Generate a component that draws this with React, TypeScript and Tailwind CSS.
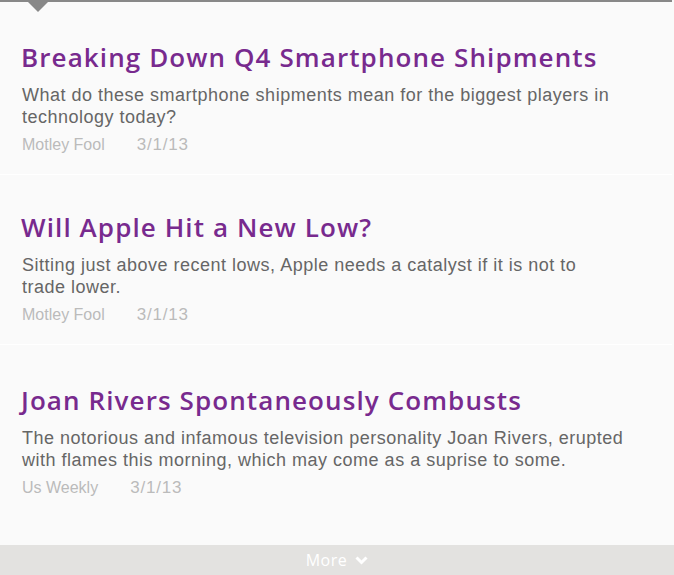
import React from "react";

const items = [
  {
    title: "Breaking Down Q4 Smartphone Shipments",
    body: "What do these smartphone shipments mean for the biggest players in technology today?",
    source: "Motley Fool",
    date: "3/1/13",
    pt: "pt-[39px]",
  },
  {
    title: "Will Apple Hit a New Low?",
    body: "Sitting just above recent lows, Apple needs a catalyst if it is not to trade lower.",
    source: "Motley Fool",
    date: "3/1/13",
    pt: "pt-[36px]",
  },
  {
    title: "Joan Rivers Spontaneously Combusts",
    body: "The notorious and infamous television personality Joan Rivers, erupted with flames this morning, which may come as a suprise to some.",
    source: "Us Weekly",
    date: "3/1/13",
    pt: "pt-[39px]",
  },
];

export default function App() {
  return (
    <div className="w-[674px] h-[575px] bg-[#fafafa] flex flex-col overflow-hidden">
      <div className="relative w-[672px] h-[2px] bg-[#888888] shrink-0">
        <svg className="absolute left-[28px] top-[2px]" width="20" height="10" viewBox="0 0 20 10">
          <polygon points="0,0 20,0 10,10" fill="#888888" />
        </svg>
      </div>
      <div className="flex-1 flex flex-col w-[672px]">
        {items.map((it, i) => (
          <div
            key={i}
            className={`${it.pt} pl-[21px] pr-[48px] ${i < 2 ? "pb-[18px] border-b border-white" : "flex-1"}`}
          >
            <h2
              className="text-[26px] leading-[32px] text-[#782a8e] font-semibold tracking-[1.1px] whitespace-nowrap"
              style={{ fontFamily: '"Open Sans", sans-serif' }}
            >
              {it.title}
            </h2>
            <p
              className="mt-[11px] pl-[1px] text-[18px] leading-[22px] text-[#666666] tracking-[0.5px]"
              style={{ fontFamily: '"Liberation Sans", Arial, sans-serif' }}
            >
              {it.body}
            </p>
            <p
              className="mt-[6px] pl-[1px] text-[17px] leading-[22px] text-[#bbbbbb]"
              style={{ fontFamily: '"Liberation Sans", Arial, sans-serif' }}
            >
              <span className="text-[16px]">{it.source}</span>
              <span className="ml-[32px] tracking-[0.8px]">{it.date}</span>
            </p>
          </div>
        ))}
      </div>
      <div className="h-[30px] shrink-0 bg-[#e3e2e0] flex items-center justify-center gap-[8px]">
        <span
          className="text-[16px] text-white tracking-[0.5px]"
          style={{ fontFamily: '"Open Sans", sans-serif' }}
        >
          More
        </span>
        <svg width="13" height="9" viewBox="0 0 13 9">
          <polyline points="1.5,1.5 6.5,6.5 11.5,1.5" fill="none" stroke="#ffffff" strokeWidth="3" />
        </svg>
      </div>
    </div>
  );
}
